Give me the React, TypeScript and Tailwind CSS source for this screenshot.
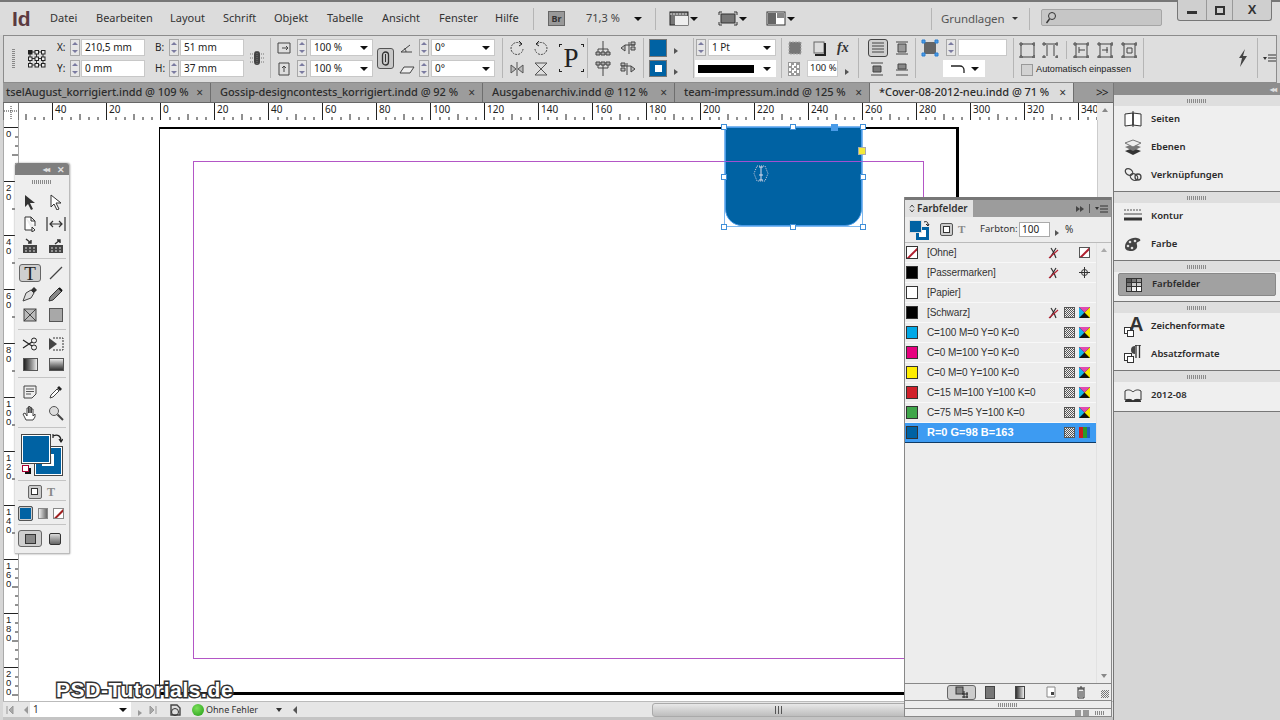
import React from 'react'

const FONT = "font-['Noto_Sans','Liberation_Sans',sans-serif]"

function Svg({ w = 16, h = 16, children, className = '' }: { w?: number; h?: number; children: React.ReactNode; className?: string }) {
  return (
    <svg width={w} height={h} viewBox={`0 0 ${w} ${h}`} className={'shrink-0 ' + className} fill="none">
      {children}
    </svg>
  )
}

const Down = () => <span className="inline-block w-0 h-0 border-l-[4px] border-r-[4px] border-t-[4px] border-l-transparent border-r-transparent border-t-[#111]" />
const Right = ({ c = 'border-l-[#555]' }: { c?: string }) => <span className={'inline-block w-0 h-0 border-t-[3px] border-b-[3px] border-l-[4px] border-t-transparent border-b-transparent ' + c} />
const Sep = ({ h = 'h-[40px]' }: { h?: string }) => <div className={'w-px bg-[#b5b5b5] shrink-0 ' + h} />
const Grip = () => <div className="w-[20px] h-[4px] bg-[repeating-linear-gradient(90deg,#8a8a8a_0,#8a8a8a_1px,transparent_1px,transparent_2px)]" />

function Spinner() {
  return (
    <div className="w-[10px] h-[17px] flex flex-col border border-[#a8a8a8] bg-[#e6e6e6] shrink-0 items-center justify-around">
      <span className="w-0 h-0 border-l-[3px] border-r-[3px] border-b-[3px] border-l-transparent border-r-transparent border-b-[#7b7ba0]" />
      <span className="w-0 h-0 border-l-[3px] border-r-[3px] border-t-[3px] border-l-transparent border-r-transparent border-t-[#7b7ba0]" />
    </div>
  )
}

function Field({ w, text, caret }: { w: string; text?: string; caret?: boolean }) {
  return (
    <div className={'h-[17px] bg-white border border-[#c8c8c8] flex items-center justify-between pl-[3px] pr-[4px] text-[10px] text-[#222] shrink-0 ' + w}>
      <span>{text}</span>
      {caret && <Down />}
    </div>
  )
}

function MenuBar() {
  const items: [string, string][] = [
    ['Datei', 'w-[46px]'], ['Bearbeiten', 'w-[74px]'], ['Layout', 'w-[53px]'], ['Schrift', 'w-[51px]'], ['Objekt', 'w-[53px]'],
    ['Tabelle', 'w-[55px]'], ['Ansicht', 'w-[57px]'], ['Fenster', 'w-[56px]'], ['Hilfe', 'w-[38px]'],
  ]
  return (
    <div className="h-[35px] shrink-0 bg-[#dcdcdc] border-t-2 border-[#777] flex items-center relative">
      <span className="w-[50px] pl-[12px] text-[21px] font-bold text-[#5b3a40] font-['Liberation_Sans',sans-serif] leading-none">Id</span>
      {items.map(([t, w]) => (
        <span key={t} className={'text-[11px] text-[#333] ' + w}>{t}</span>
      ))}
      <Sep h="h-[22px]" />
      <div className="ml-[14px] w-[17px] h-[15px] bg-[#999] border border-[#666] text-[9px] font-bold text-[#333] flex items-center justify-center">Br</div>
      <span className="ml-[21px] w-[48px] text-[11px] text-[#444]">71,3 %</span>
      <Down />
      <div className="ml-[13px]"><Sep h="h-[22px]" /></div>
      <div className="ml-[13px] flex items-center gap-[1px] w-[49px]">
        <Svg w={20} h={15}><rect x="1" y="1" width="18" height="13" fill="#777" stroke="#222" /><rect x="6" y="5" width="13" height="9" fill="#eee" /><path d="M1 3h18" stroke="#ddd" strokeDasharray="2 1" /></Svg>
        <Down />
      </div>
      <div className="flex items-center gap-[1px] w-[48px]">
        <Svg w={20} h={15}><rect x="3" y="3" width="14" height="9" fill="#777" stroke="#333" /><path d="M1 1h3M1 1v3M19 1h-3M19 1v3M1 14h3M1 14v-3M19 14h-3M19 14v-3" stroke="#333" /></Svg>
        <Down />
      </div>
      <div className="flex items-center gap-[1px] w-[165px]">
        <Svg w={20} h={15}><rect x="1" y="1" width="18" height="13" fill="#fff" stroke="#333" /><rect x="2" y="2" width="8" height="11" fill="#666" /><rect x="11" y="2" width="7" height="5" fill="#888" /></Svg>
        <Down />
      </div>
      <Sep h="h-[22px]" />
      <span className="ml-[9px] w-[71px] text-[11.5px] text-[#555] tracking-[-0.1px]">Grundlagen</span>
      <span className="w-0 h-0 border-l-[3px] border-r-[3px] border-t-[3px] border-l-transparent border-r-transparent border-t-[#333]" />
      <div className="ml-[11px]"><Sep h="h-[22px]" /></div>
      <div className="ml-[11px] w-[121px] h-[17px] -mt-[2px] bg-[#c6c6c6] border border-[#a5a5a5] rounded-[2px] flex items-center pl-[3px]">
        <Svg w={12} h={13}><circle cx="7" cy="5" r="3.5" stroke="#333" /><path d="M4.5 8L1.5 12" stroke="#333" strokeWidth="1.4" /></Svg>
      </div>
      <div className="absolute right-[8px] top-[-2px] h-[21px] w-[95px] flex border border-t-0 border-[#777] rounded-b-[3px] bg-[#cfcfcf] items-center">
        <div className="w-[28px] flex justify-center"><div className="w-[10px] h-[3px] bg-[#333] mt-[4px]" /></div>
        <div className="w-[27px] h-full border-x border-[#999] flex items-center justify-center"><div className="w-[10px] h-[9px] border-2 border-[#333]" /></div>
        <div className="flex-1 text-center text-[13px] font-bold text-[#333] font-['Liberation_Sans',sans-serif]">X</div>
      </div>
    </div>
  )
}

function Cell({ w, children, cls = '' }: { w: string; children?: React.ReactNode; cls?: string }) {
  return <div className={'shrink-0 flex items-center justify-center ' + w + ' ' + cls}>{children}</div>
}

function TwoRow({ top, bottom, w }: { top: React.ReactNode; bottom: React.ReactNode; w: string }) {
  return (
    <div className={'shrink-0 flex flex-col gap-[4px] ' + w}>
      <div className="h-[17px] flex items-center">{top}</div>
      <div className="h-[17px] flex items-center">{bottom}</div>
    </div>
  )
}

const IconBox = ({ d, fill = 'none' }: { d: string; fill?: string }) => (
  <Svg w={16} h={16}><path d={d} stroke="#444" fill={fill} /></Svg>
)

function ControlBar() {
  return (
    <div className="h-[48px] shrink-0 mx-[3px] pb-[2px] bg-[#dedede] border border-[#8c8c8c] flex items-center text-[#222]">
      <div className="w-[18px] flex justify-center"><div className="w-[3px] h-[19px] bg-[repeating-linear-gradient(0deg,#888_0,#888_1px,transparent_1px,transparent_2px)]" /></div>
      <Cell w="w-[28px]">
        <Svg w={19} h={19}>
          <path d="M3 3h14M3 9.500h14M3 16h14M3 3v13M9.500 3v13M16 3v13" stroke="#333" />
          {[1, 7.5, 14].map(y => [1, 7.5, 14].map(x => <rect key={`${x}${y}`} x={x + 0.5} y={y + 0.5} width="3.500" height="3.500" stroke="#222" fill={x === 1 && y === 1 ? '#222' : '#eee'} />))}
        </Svg>
      </Cell>
      <TwoRow w="w-[99px]"
        top={<><span className="w-[13px] ml-[7px] text-[10px]">X:</span><Spinner /><span className="w-[1px]" /><Field w="w-[64px]" text="210,5 mm" /></>}
        bottom={<><span className="w-[13px] ml-[7px] text-[10px]">Y:</span><Spinner /><span className="w-[1px]" /><Field w="w-[64px]" text="0 mm" /></>}
      />
      <TwoRow w="w-[97px]"
        top={<><span className="w-[14px] ml-[6px] text-[10px]">B:</span><Spinner /><span className="w-[1px]" /><Field w="w-[64px]" text="51 mm" /></>}
        bottom={<><span className="w-[14px] ml-[6px] text-[10px]">H:</span><Spinner /><span className="w-[1px]" /><Field w="w-[64px]" text="37 mm" /></>}
      />
      <Cell w="w-[22px]" cls="mr-[2px]">
        <Svg w={14} h={16}><rect x="4" y="1" width="6" height="14" rx="3" fill="#444" /><path d="M0 4h3M0 8h3M0 12h3M11 4h3M11 8h3M11 12h3M7 1v14" stroke="#777" strokeDasharray="1 1" /></Svg>
      </Cell>
      <Sep />
      <TwoRow w="w-[105px]"
        top={<><span className="w-[26px] flex justify-center"><IconBox d="M2 3h12v10H2zM6 8h6M10 6l2 2-2 2" /></span><Spinner /><span className="w-[3px]" /><Field w="w-[63px]" text="100 %" caret /></>}
        bottom={<><span className="w-[26px] flex justify-center"><IconBox d="M3 2h10v12H3zM8 11V5M6 7l2-2 2 2" /></span><Spinner /><span className="w-[3px]" /><Field w="w-[63px]" text="100 %" caret /></>}
      />
      <Cell w="w-[18px]">
        <div className="w-[17px] h-[21px] border border-[#555] rounded-[3px] bg-[#c9c9c9] flex items-center justify-center">
          <Svg w={9} h={15}><rect x="1.5" y="1" width="6" height="13" rx="3" stroke="#333" strokeWidth="1.3" /><path d="M4.5 3v8" stroke="#333" /></Svg>
        </div>
      </Cell>
      <TwoRow w="w-[108px]"
        top={<><span className="w-[25px] flex justify-center"><IconBox d="M2 12L11 5M2 12h11M7 12c0-2-1-3-2-3.500" /></span><Spinner /><span className="w-[2px]" /><Field w="w-[64px]" text="0°" caret /></>}
        bottom={<><span className="w-[25px] flex justify-center"><IconBox d="M1 12L5 6h10l-4 6z" fill="#eee" /></span><Spinner /><span className="w-[2px]" /><Field w="w-[64px]" text="0°" caret /></>}
      />
      <Sep />
      <TwoRow w="w-[52px]"
        top={<span className="flex pl-[6px] gap-[8px]">
          <Svg w={16} h={16}><path d="M12 4A6 6 0 1 0 14 9" stroke="#444" strokeDasharray="2 1" /><path d="M10 1l3 3-3 2" stroke="#222" /></Svg>
          <Svg w={16} h={16}><path d="M4 4A6 6 0 1 1 2 9" stroke="#444" strokeDasharray="2 1" /><path d="M6 1L3 4l3 2" stroke="#222" /></Svg>
        </span>}
        bottom={<span className="flex pl-[6px] gap-[8px]">
          <Svg w={16} h={16}><path d="M8 1v14M2 4l5 4-5 4zM14 4l-5 4 5 4z" stroke="#555" fill="#bbb" /></Svg>
          <Svg w={16} h={16}><path d="M2 2h12L8 8zM2 14h12L8 8z" stroke="#555" fill="#ddd" /></Svg>
        </span>}
      />
      <Cell w="w-[32px]">
        <div className="relative w-[25px] h-[34px] flex items-center justify-center font-['Liberation_Serif',serif] text-[27px] leading-none text-[#222]">
          P
          <span className="absolute left-0 top-[3px] w-[3px] h-[3px] border-l border-t border-[#222]" />
          <span className="absolute right-0 top-[3px] w-[3px] h-[3px] border-r border-t border-[#222]" />
          <span className="absolute left-0 bottom-[3px] w-[3px] h-[3px] border-l border-b border-[#222]" />
          <span className="absolute right-0 bottom-[3px] w-[3px] h-[3px] border-r border-b border-[#222]" />
        </div>
      </Cell>
      <Sep />
      <TwoRow w="w-[55px]"
        top={<span className="flex pl-[7px] gap-[9px]">
          <IconBox d="M8 1v3M3 9h10M3 9v3M8 4v8M13 9v3M1 12h4v3H1zM6 12h4v3H6zM11 12h4v3h-4z" fill="#aaa" />
          <IconBox d="M9 2v12M5 5h10M1 8l4-3v6z M11 2h4v3h-4zM11 7h4v3h-4z" fill="#bbb" />
        </span>}
        bottom={<span className="flex pl-[7px] gap-[9px]">
          <IconBox d="M8 15v-3M3 7h10M3 7V4M8 12V4M13 7V4M1 1h4v3H1zM6 1h4v3H6zM11 1h4v3h-4z" fill="#aaa" />
          <IconBox d="M7 2v12M11 5H1M15 8l-4-3v6zM1 2h4v3H1zM1 7h4v3H1z" fill="#bbb" />
        </span>}
      />
      <Sep />
      <TwoRow w="w-[49px]"
        top={<><div className="ml-[5px] w-[18px] h-[18px] bg-[#0062a3] border border-[#777]" /><span className="ml-[7px]"><Right /></span></>}
        bottom={<><div className="ml-[5px] w-[18px] h-[17px] bg-[#0062a3] border border-[#777] flex items-center justify-center"><div className="w-[7px] h-[7px] bg-white" /></div><span className="ml-[7px]"><Right /></span></>}
      />
      <Sep />
      <TwoRow w="w-[87px]"
        top={<><span className="w-[2px]" /><Spinner /><span className="w-[2px]" /><Field w="w-[68px]" text="1 Pt" caret /></>}
        bottom={<div className="ml-[1px] h-[17px] w-[81px] bg-white flex items-center justify-between pl-[3px] pr-[5px]"><div className="w-[56px] h-[8px] bg-black" /><Down /></div>}
      />
      <Sep />
      <TwoRow w="w-[76px]"
        top={<span className="flex items-center pl-[5px] gap-[9px]">
          <Svg w={16} h={16}><rect x="2" y="2" width="12" height="12" fill="#777" stroke="#aaa" strokeDasharray="2 1" /></Svg>
          <Svg w={16} h={16}><rect x="2" y="2" width="10" height="11" fill="#ddd" stroke="#666" /><path d="M13 3v12H3" stroke="#222" strokeWidth="2" /></Svg>
          <span className="font-['Liberation_Serif',serif] italic font-bold text-[14px] text-[#333] leading-none">fx</span>
        </span>}
        bottom={<span className="flex items-center pl-[6px]">
          <span className="w-[12px] h-[14px] border border-[#999] bg-[repeating-conic-gradient(#999_0_25%,#fff_0_50%)] bg-[length:5px_5px]" />
          <div className="ml-[7px] w-[31px] h-[17px] bg-white border border-[#ccc] text-[9.5px] whitespace-nowrap flex items-center pl-[2px]">100 %</div>
          <span className="ml-[7px]"><Right /></span>
        </span>}
      />
      <Sep />
      <TwoRow w="w-[56px]"
        top={<span className="flex items-center pl-[9px] gap-[6px]">
          <span className="w-[20px] h-[18px] border border-[#444] rounded-[3px] bg-[#cfcfcf] flex items-center justify-center"><IconBox d="M2 3h12M2 6h12M2 9h12M2 12h12" /></span>
          <IconBox d="M2 2h12M2 14h12M4 4h8v8H4z" fill="#999" />
        </span>}
        bottom={<span className="flex items-center pl-[10px] gap-[9px]">
          <IconBox d="M2 2h12M2 14h12M4 5h8v6H4z" fill="#777" />
          <IconBox d="M2 9h12M2 14h12M4 3h8v5H4z" fill="#888" />
        </span>}
      />
      <Sep />
      <TwoRow w="w-[97px]"
        top={<><span className="ml-[5px] w-[25px]"><Svg w={18} h={18}><rect x="3" y="3" width="12" height="12" fill="#666" /><path d="M1 1h3v3H1zM14 1h3v3h-3zM1 14h3v3H1zM14 14h3v3h-3z" stroke="#2a7fd0" fill="#4a9be8" /></Svg></span><Spinner /><span className="w-[2px]" /><Field w="w-[49px]" /></>}
        bottom={<div className="ml-[27px] w-[42px] h-[17px] bg-white flex items-center justify-center gap-[5px]"><Svg w={16} h={10}><path d="M1 2h9a4 4 0 0 1 4 4v3" stroke="#222" strokeWidth="1.3" /></Svg><Down /></div>}
      />
      <Sep />
      <div className="w-[129px] shrink-0 flex flex-col gap-[5px] pl-[5px]">
        <div className="h-[18px] flex items-center">
          <IconBox d="M1 1h2v2H1zM14 1h2v2h-2zM1 14h2v2H1zM14 14h2v2h-2zM3 2h11M2 3v11M15 3v11M3 15h11" />
          <span className="ml-[7px]"><IconBox d="M1 1h2v2H1zM14 1h2v2h-2zM1 14h2v2H1zM14 14h2v2h-2zM3 2h11M5 3v11M12 3v11" /></span>
          <span className="ml-[8px]"><Sep h="h-[18px]" /></span>
          <span className="ml-[6px]"><IconBox d="M1 1h2v2H1zM14 1h2v2h-2zM1 14h2v2H1zM14 14h2v2h-2zM3 2h11M3 15h11M3 3v11M14 3v11M6 5v6M6 8h6" /></span>
          <span className="ml-[8px]"><IconBox d="M1 1h2v2H1zM14 1h2v2h-2zM1 14h2v2H1zM14 14h2v2h-2zM3 2h11M3 15h11M3 3v11M14 3v11M10 5v6M5 8h6" /></span>
          <span className="ml-[8px]"><IconBox d="M1 1h2v2H1zM14 1h2v2h-2zM1 14h2v2H1zM14 14h2v2h-2zM3 2h11M3 15h11M3 3v11M14 3v11M6 6h5v5H6z" /></span>
        </div>
        <div className="h-[12px] flex items-center ml-[2px]">
          <span className="w-[12px] h-[12px] border border-[#999] bg-[#d2d2d2]" />
          <span className="ml-[3px] text-[9.2px] text-[#222] whitespace-nowrap font-['Liberation_Sans',sans-serif]">Automatisch einpassen</span>
        </div>
      </div>
      <Sep />
      <Cell w="w-[113px]" cls="justify-end pr-[9px]">
        <Svg w={10} h={18}><path d="M7 0L1 9h3l-2 9 7-11H5z" fill="#444" /></Svg>
      </Cell>
      <Sep />
      <div className="flex items-center gap-[1px] pl-[5px]">
        <span className="w-0 h-0 border-l-[2px] border-r-[2px] border-t-[3px] border-l-transparent border-r-transparent border-t-[#333]" />
        <Svg w={8} h={8}><path d="M0 1h8M0 4h8M0 7h8" stroke="#333" /></Svg>
      </div>
    </div>
  )
}

const tabs = [
  { t: 'tselAugust_korrigiert.indd @ 109 %', w: 'w-[208px] pl-[3px]', cls: '' },
  { t: 'Gossip-designcontests_korrigiert.indd @ 92 %', w: 'w-[272px] pl-[9px]', cls: '' },
  { t: 'Ausgabenarchiv.indd @ 112 %', w: 'w-[192px] pl-[9px]', cls: '' },
  { t: 'team-impressum.indd @ 125 %', w: 'w-[195px] pl-[9px]', cls: '' },
  { t: '*Cover-08-2012-neu.indd @ 71 %', w: 'w-[204px] pl-[9px]', cls: 'bg-[#dcdcdc]' },
]

function Tabs() {
  return (
    <div className="h-[20px] shrink-0 ml-[3px] bg-[#9c9c9c] border-b border-[#666] flex items-center overflow-hidden">
      {tabs.map(tab => (
        <div key={tab.t} className={'h-full shrink-0 flex items-center justify-between pr-[7px] border-r border-[#6e6e6e] overflow-hidden ' + tab.w + ' ' + tab.cls}>
          <span className="text-[11px] font-medium text-[#2c2c2c] whitespace-nowrap tracking-[-0.05px]">{tab.t}</span>
          <span className="text-[12px] text-[#333] leading-none ml-[4px]">×</span>
        </div>
      ))}
      <div className="ml-[22px] text-[12px] text-[#222] tracking-[-1px]">&gt;&gt;</div>
    </div>
  )
}

const hLabels = ['', '40', '20', '0', '20', '40', '60', '80', '100', '120', '140', '160', '180', '200', '220', '240', '260', '280', '300', '320', '340']

function Ruler() {
  return (
    <div className="h-[17px] shrink-0 flex bg-white ml-[3px]">
      <div className="w-[16px] shrink-0 border-l border-[#777] border-r border-[#222] relative">
        <Svg w={14} h={17}><path d="M0 8h14M7 3v14" stroke="#333" strokeDasharray="1 1" /></Svg>
      </div>
      <div className="flex-1 overflow-hidden">
        <div className="flex ml-[-21px] h-full">
          {hLabels.map((n, i) => (
            <div key={i} className="w-[54px] shrink-0 h-full border-l border-[#222] relative pl-[2px] text-[10px] leading-[12px] text-[#222]">
              {n}
              <Svg w={53} h={17} className="absolute left-0 top-0">
                <path d="M9 14v3M18 14v3M27 11v6M36 14v3M45 14v3" stroke="#222" />
              </Svg>
            </div>
          ))}
        </div>
      </div>
      <div className="w-[16px] shrink-0 bg-[#ececec] flex justify-center pt-[5px]">
        <span className="w-0 h-0 border-l-[3px] border-r-[3px] border-b-[4px] border-l-transparent border-r-transparent border-b-[#888]" />
      </div>
    </div>
  )
}

const vLabels = ['0', '20', '40', '60', '80', '100', '120', '140', '160', '180', '200']

function VRuler() {
  return (
    <div className="w-[16px] ml-[3px] shrink-0 bg-white border-l border-[#777] border-r border-[#aaa] overflow-hidden pt-[7px]">
      {vLabels.map(n => (
        <div key={n} className="h-[54px] border-t border-[#222] relative pl-[2px] pt-[1px] text-[9.5px] leading-[9px] text-[#222] font-['Liberation_Sans',sans-serif]">
          {n.split('').map((c, i) => <div key={i}>{c}</div>)}
          <Svg w={14} h={53} className="absolute left-0 top-0">
            <path d="M11 9h3M11 18h3M8 27h6M11 36h3M11 45h3" stroke="#222" />
          </Svg>
        </div>
      ))}
    </div>
  )
}

const Handle = ({ cls }: { cls: string }) => <span className={'absolute w-[6px] h-[6px] bg-white border border-[#3f8fd8] ' + cls} />

function Canvas() {
  return (
    <div className="flex-1 min-h-0 flex">
      <VRuler />
      <div className="flex-1 bg-white relative overflow-hidden">
        {/* Seite */}
        <div className="absolute left-[140px] top-[7px] w-[800px] h-[568px] border-t-2 border-l border-r-[3px] border-b-[3px] border-black">
          <div className="absolute left-[33px] top-[32px] w-[731px] h-[498px] border border-[#b356c6]" />
          <div className="absolute left-[565px] top-[-2px] w-[137px] h-[99px]">
            <div className="absolute inset-0 bg-[#0062a3] rounded-b-[17px] border-[1px] border-[#4a9be8]" />
            <div className="absolute left-[-1px] right-[-1px] top-[-1px] bottom-[-1px] border border-[#4a9be8]/70" />
            <div className="absolute left-0 right-0 top-[34px] h-px bg-[#a050d0]" />
            <Handle cls="left-[-4px] top-[-3px]" />
            <Handle cls="left-[65px] top-[-3px]" />
            <Handle cls="right-[-4px] top-[-3px]" />
            <Handle cls="left-[-4px] top-[47px]" />
            <Handle cls="right-[-4px] top-[47px]" />
            <Handle cls="left-[-4px] bottom-[-4px]" />
            <Handle cls="left-[65px] bottom-[-4px]" />
            <Handle cls="right-[-4px] bottom-[-4px]" />
            <span className="absolute left-[106px] top-[-3px] w-[7px] h-[7px] bg-[#4a9be8]" />
            <span className="absolute right-[-4px] top-[20px] w-[8px] h-[8px] bg-[#f4ea3a] border border-[#aaa]" />
            <Svg w={16} h={17} className="absolute left-[28px] top-[38px]">
              <path d="M4 1h8l3 7.500-3 7.500H4L1 8.500z" stroke="#ccd" strokeDasharray="1 1" />
              <path d="M6 2h4M8 2v13M6 15h4M6 10h4" stroke="#dde" />
            </Svg>
          </div>
        </div>
      </div>
      <div className="w-[16px] shrink-0 bg-[#ececec] border-l border-[#ccc]" />
    </div>
  )
}

function StatusBar() {
  return (
    <div className="h-[19px] shrink-0 ml-[3px] border-t border-[#bbb] border-b-[3px] border-b-[#c4c4c4] bg-[#e6e6e6] flex items-center text-[#333]">
      <span className="ml-[1px] w-[12px] flex justify-center"><Svg w={8} h={8}><path d="M1 0v8M7 0L3 4l4 4z" stroke="#999" fill="#aaa" /></Svg></span>
      <span className="ml-[7px]"><Svg w={6} h={8}><path d="M5 0L1 4l4 4z" fill="#999" /></Svg></span>
      <div className="ml-[1px] w-[101px] h-[15px] bg-white flex items-center justify-between pl-[3px] pr-[4px] text-[10px]"><span>1</span><Down /></div>
      <span className="ml-[7px]"><Right c="border-l-[#999]" /></span>
      <span className="ml-[7px]"><Svg w={8} h={8}><path d="M1 0l4 4-4 4zM7 0v8" stroke="#999" fill="#aaa" /></Svg></span>
      <span className="ml-[11px]"><Svg w={14} h={14}><path d="M3 2h6l3 3v7H3z" fill="#ddd" stroke="#444" strokeWidth="1.4" /><circle cx="7" cy="9" r="3.500" stroke="#333" /></Svg></span>
      <span className="ml-[10px] w-[12px] h-[12px] rounded-full bg-[radial-gradient(circle_at_40%_35%,#7be05a,#1f9a14)]" />
      <span className="ml-[2px] w-[70px] text-[9px] whitespace-nowrap">Ohne Fehler</span>
      <span className="w-0 h-0 border-l-[3px] border-r-[3px] border-t-[4px] border-l-transparent border-r-transparent border-t-[#333]" />
      <span className="ml-[11px] w-0 h-0 border-t-[4px] border-b-[4px] border-r-[4px] border-t-transparent border-b-transparent border-r-[#555]" />
      <div className="ml-[355px] w-[253px] h-[14px] border border-[#aaa] rounded-l-[3px] bg-gradient-to-b from-[#e8e8e8] to-[#bdbdbd] flex items-center justify-center">
        <div className="w-[7px] h-[8px] bg-[repeating-linear-gradient(90deg,#555_0,#555_1px,transparent_1px,transparent_3px)]" />
      </div>
    </div>
  )
}

/* ---- Werkzeuge ---- */
function ToolRow({ a, b, h = 'h-[21px]', aActive }: { a: React.ReactNode; b: React.ReactNode; h?: string; aActive?: boolean }) {
  return (
    <div className={'flex items-center justify-between pl-[4px] pr-[2px] ' + h}>
      <div className={'w-[22px] h-[18px] flex items-center justify-center rounded-[3px] ' + (aActive ? 'border border-[#666] bg-[#cfcfcf]' : '')}>{a}</div>
      <div className="w-[22px] flex items-center justify-center">{b}</div>
    </div>
  )
}
const Line = () => <div className="mx-[3px] h-px bg-[#c4c4c4]" />

function ToolPanel() {
  return (
    <div className="absolute left-[15px] top-[163px] w-[55px] h-[391px] bg-[#eeeeee] border-r border-b border-[#bbb] rounded-t-[3px] flex flex-col shadow-[0_0_2px_#888]">
      <div className="h-[12px] bg-[#7f7f7f] rounded-t-[3px] flex items-center justify-end gap-[8px] pr-[4px] text-[#ddd]">
        <span className="text-[8px] leading-none font-bold tracking-[-1px]">◂◂</span>
        <span className="text-[9px] leading-none font-bold">✕</span>
      </div>
      <div className="flex justify-center pt-[5px] pb-[7px]"><Grip /></div>
      <ToolRow
        a={<Svg w={14} h={16}><path d="M2 1l10 8H7l3 6-2 1-3-6-3 3z" fill="#333" /></Svg>}
        b={<Svg w={14} h={16}><path d="M2 1l10 8H7l3 6-2 1-3-6-3 3z" fill="#fff" stroke="#333" /></Svg>}
        h="h-[22px]"
      />
      <ToolRow
        a={<Svg w={14} h={16}><path d="M2 1h6l4 4v5M2 1v13h7M8 1v4h4M9 11l3 3-3 2z" stroke="#333" fill="#fff" /></Svg>}
        b={<Svg w={20} h={14}><path d="M1 0v14M19 0v14M4 7h12M7 4L4 7l3 3M13 4l3 3-3 3" stroke="#333" strokeWidth="1.2" /></Svg>}
        h="h-[22px]"
      />
      <ToolRow
        a={<Svg w={16} h={16}><path d="M1 7h14v8H1z" fill="#444" /><path d="M3 10h2M7 10h2M11 10h2M3 13h2M7 13h2M11 13h2" stroke="#ddd" /><path d="M4 1l5 4M9 2v3H6" stroke="#333" strokeWidth="1.4" /></Svg>}
        b={<Svg w={16} h={16}><path d="M1 7h14v8H1z" fill="#444" /><path d="M3 10h2M7 10h2M11 10h2M3 13h2M7 13h2M11 13h2" stroke="#ddd" /><path d="M7 6l5-4M9 2h3v3" stroke="#333" strokeWidth="1.4" /></Svg>}
        h="h-[22px]"
      />
      <div className="pt-[1px] pb-[4px]"><Line /></div>
      <ToolRow aActive
        a={<span className="font-['Liberation_Serif',serif] text-[19px] leading-none text-[#222]">T</span>}
        b={<Svg w={14} h={14}><path d="M1 13L13 1" stroke="#444" strokeWidth="1.2" /></Svg>}
        h="h-[20px]"
      />
      <ToolRow
        a={<Svg w={16} h={16}><path d="M1 15l3-8 5-3 3 3-3 5z" fill="#ddd" stroke="#444" /><path d="M9 4l3-3 3 3-3 3z" fill="#333" /></Svg>}
        b={<Svg w={16} h={16}><path d="M2 11L11 2l3 3-9 9-4 1z" fill="#888" stroke="#333" /><path d="M11 2l3 3" stroke="#111" strokeWidth="2" /></Svg>}
        h="h-[22px]"
      />
      <ToolRow
        a={<Svg w={14} h={14}><rect x="1" y="1" width="12" height="12" fill="#bbb" stroke="#444" /><path d="M1 1l12 12M13 1L1 13" stroke="#444" /></Svg>}
        b={<Svg w={14} h={14}><rect x="0.500" y="0.500" width="13" height="13" fill="#a8a8a8" stroke="#555" /></Svg>}
        h="h-[20px]"
      />
      <div className="pt-[4px] pb-[3px]"><Line /></div>
      <ToolRow
        a={<Svg w={16} h={14}><circle cx="12" cy="3.500" r="2.500" stroke="#222" /><circle cx="12" cy="10.500" r="2.500" stroke="#222" /><path d="M1 3l9 6M1 11l9-6" stroke="#222" strokeWidth="1.2" /></Svg>}
        b={<Svg w={16} h={14}><path d="M1 1l8 6-8 6z" fill="#444" /><path d="M5 1h10v12H5" stroke="#333" strokeDasharray="2 1" /></Svg>}
        h="h-[21px]"
      />
      <ToolRow
        a={<div className="w-[15px] h-[13px] bg-gradient-to-r from-[#222] to-[#eee] border border-[#555]" />}
        b={<div className="w-[15px] h-[13px] bg-gradient-to-b from-[#eee] to-[#333] border border-[#555]" />}
        h="h-[21px]"
      />
      <div className="pt-[2px] pb-[3px]"><Line /></div>
      <ToolRow
        a={<Svg w={14} h={14}><path d="M1 1h12v8l-4 4H1z" fill="#eee" stroke="#444" /><path d="M3 4h8M3 6.500h8M3 9h5" stroke="#555" /></Svg>}
        b={<Svg w={14} h={14}><path d="M1 13l1-3 6-6 2 2-6 6z" fill="#fff" stroke="#444" /><path d="M8 3l2-2 3 3-2 2z" fill="#222" /></Svg>}
        h="h-[21px]"
      />
      <ToolRow
        a={<Svg w={16} h={16}><path d="M4 15l-3-6 2-1 2 3V3h1.500v5V1.500H8V8V2.500h1.500V8V4H11v7l2-2v3l-2 3z" fill="#fff" stroke="#444" /></Svg>}
        b={<Svg w={16} h={16}><circle cx="6" cy="6" r="4.500" fill="#ddd" stroke="#555" /><path d="M9.500 9.500L15 15" stroke="#444" strokeWidth="2" /></Svg>}
        h="h-[21px]"
      />
      <div className="pt-[4px]"><Line /></div>
      <div className="relative h-[48px] shrink-0">
        <div className="absolute left-[20px] top-[19px] w-[27px] h-[28px] bg-[#0062a3] border border-white shadow-[0_0_0_1px_#444] flex items-center justify-center">
          <div className="w-[12px] h-[12px] border-2 border-white bg-[#eee] ml-[-2px] mt-[-2px]" />
        </div>
        <div className="absolute left-[7px] top-[7px] w-[28px] h-[28px] bg-[#0062a3] border border-white shadow-[0_0_0_1px_#444]" />
        <Svg w={11} h={11} className="absolute left-[37px] top-[5px]"><path d="M1 3c5-2 8 0 8 5M7 6l2 3 2-3M1 1v4" stroke="#222" strokeWidth="1.2" /></Svg>
        <Svg w={10} h={10} className="absolute left-[7px] top-[37px]"><rect x="3" y="3" width="6" height="6" fill="#111" /><rect x="0.500" y="0.500" width="6" height="6" fill="#fff" stroke="#a03" /></Svg>
      </div>
      <div className="pt-[4px] pb-[2px]"><Line /></div>
      <div className="h-[17px] flex items-center justify-center gap-[5px] pr-[1px]">
        <span className="w-[14px] h-[14px] border border-[#666] rounded-[2px] bg-[#ccc] flex items-center justify-center"><span className="w-[7px] h-[7px] bg-white border border-[#333]" /></span>
        <span className="font-['Liberation_Serif',serif] font-bold text-[12px] text-[#888]">T</span>
      </div>
      <div className="pb-[4px]"><Line /></div>
      <div className="h-[16px] flex items-center gap-[5px] pl-[3px]">
        <span className="w-[15px] h-[15px] border border-[#555] rounded-[2px] bg-[#0062a3] shadow-[inset_0_0_0_1px_#ccc]" />
        <span className="w-[10px] h-[11px] bg-gradient-to-r from-[#eee] to-[#666] border border-[#888]" />
        <span className="w-[11px] h-[11px] bg-white border border-[#888] relative overflow-hidden">
          <span className="absolute left-[-2px] top-[4px] w-[15px] h-[2px] bg-[#a02020] -rotate-45" />
        </span>
      </div>
      <div className="pt-[3px] pb-[5px]"><Line /></div>
      <div className="flex items-center pl-[3px] pr-[4px] justify-between">
        <span className="w-[24px] h-[17px] border border-[#666] rounded-[3px] bg-[#cfcfcf] flex items-center justify-center"><span className="w-[11px] h-[10px] bg-[#888] border border-[#333]" /></span>
        <span className="w-[12px] h-[12px] mr-[4px] rounded-[2px] bg-gradient-to-b from-[#ddd] to-[#666] border border-[#333]" />
      </div>
    </div>
  )
}

/* ---- Farbfelder ---- */
const swatches = [
  { n: '[Ohne]', c: 'bg-white', none: true, x: true, end: 'none' },
  { n: '[Passermarken]', c: 'bg-black', x: true, end: 'reg' },
  { n: '[Papier]', c: 'bg-white' },
  { n: '[Schwarz]', c: 'bg-black', x: true, g: true, end: 'cmyk' },
  { n: 'C=100 M=0 Y=0 K=0', c: 'bg-[#00a8e6]', g: true, end: 'cmyk' },
  { n: 'C=0 M=100 Y=0 K=0', c: 'bg-[#e6007e]', g: true, end: 'cmyk' },
  { n: 'C=0 M=0 Y=100 K=0', c: 'bg-[#ffed00]', g: true, end: 'cmyk' },
  { n: 'C=15 M=100 Y=100 K=0', c: 'bg-[#d0202a]', g: true, end: 'cmyk' },
  { n: 'C=75 M=5 Y=100 K=0', c: 'bg-[#3fa64a]', g: true, end: 'cmyk' },
  { n: 'R=0 G=98 B=163', c: 'bg-[#0062a3]', g: true, end: 'rgb', sel: true },
]

const Cmyk = () => (
  <Svg w={11} h={11}>
    <rect width="11" height="11" fill="#111" />
    <path d="M0 0l5.500 5.500L0 11z" fill="#19b5e8" /><path d="M11 0L5.500 5.500 11 11z" fill="#f5e500" /><path d="M0 0h11L5.500 5.500z" fill="#e04ab0" />
  </Svg>
)
const Rgb = () => (
  <Svg w={11} h={11}><rect width="4" height="11" fill="#c81e1e" /><rect x="4" width="4" height="11" fill="#2a9a2a" /><rect x="8" width="3" height="11" fill="#1f5fc0" /></Svg>
)
const NoPrint = () => (
  <Svg w={11} h={12}><path d="M3 1l3 5 2 5M8 1L5 6l-3 5" stroke="#333" strokeWidth="1.2" /><path d="M1 11L10 3" stroke="#b02030" strokeWidth="1.2" /></Svg>
)
const Grey = () => <span className="w-[11px] h-[11px] border border-[#555] bg-[repeating-conic-gradient(#555_0_25%,#eee_0_50%)] bg-[length:2px_2px]" />

function SwatchRow({ s }: { s: (typeof swatches)[number] }) {
  return (
    <div className={'h-[20px] flex items-center pl-[1px] border-b ' + (s.sel ? 'bg-[#3d9bf2] border-[#0f3b66]' : 'border-[#f8f8f8]')}>
      <span className={'w-[12px] h-[13px] border border-[#333] relative overflow-hidden shrink-0 ' + s.c}>
        {s.none && <span className="absolute left-[-3px] top-[5px] w-[18px] h-[1.5px] bg-[#b02030] -rotate-45" />}
      </span>
      <span className={"ml-[9px] w-[114px] whitespace-nowrap font-['Liberation_Sans',sans-serif] " + (s.sel ? 'text-[11px] text-white font-bold' : 'text-[10px] tracking-[-0.1px] text-[#333]')}>{s.n}</span>
      <span className="w-[13px] ml-[6px] flex justify-center">{s.x && <NoPrint />}</span>
      <span className="w-[12px] ml-[3px] flex justify-center">{s.g && <Grey />}</span>
      <span className="w-[11px] ml-[4px] flex justify-center">
        {s.end === 'cmyk' && <Cmyk />}
        {s.end === 'rgb' && <Rgb />}
        {s.end === 'none' && <span className="w-[11px] h-[11px] border border-[#555] bg-white relative overflow-hidden block"><span className="absolute left-[-2px] top-[4px] w-[14px] h-[2px] bg-[#b02030] -rotate-45" /></span>}
        {s.end === 'reg' && <Svg w={11} h={11}><circle cx="5.500" cy="5.500" r="3" stroke="#333" /><path d="M5.500 0v11M0 5.500h11" stroke="#333" /></Svg>}
      </span>
    </div>
  )
}

function SwatchPanel() {
  return (
    <div className="absolute left-[904px] top-[197px] w-[208px] h-[520px] bg-[#ededed] border-l border-r border-b border-[#888] flex flex-col">
      <div className="h-[20px] shrink-0 bg-[#9c9c9c] border-t-[3px] border-[#777] flex items-stretch">
        <div className="w-[68px] bg-[#e2e2e2] text-[10px] font-semibold text-[#333] flex items-center gap-[2px] pl-[4px]">
          <Svg w={6} h={9}><path d="M1 3.500L3 1l2 2.500M1 5.500L3 8l2-2.500" stroke="#444" /></Svg>Farbfelder
        </div>
        <div className="flex-1 flex items-center justify-end pr-[3px] gap-[5px]">
          <span className="flex"><Right c="border-l-[#444]" /><Right c="border-l-[#444]" /></span>
          <span className="w-px h-[9px] bg-[#555]" />
          <span className="flex items-center gap-[1px]">
            <span className="w-0 h-0 border-l-[2px] border-r-[2px] border-t-[3px] border-l-transparent border-r-transparent border-t-[#333]" />
            <Svg w={8} h={8}><path d="M0 1h8M0 4h8M0 7h8" stroke="#333" /></Svg>
          </span>
        </div>
      </div>
      <div className="h-[26px] shrink-0 flex items-center border-b border-[#bbb] pl-[4px]">
        <div className="relative w-[21px] h-[20px] shrink-0">
          <span className="absolute right-[1px] bottom-0 w-[13px] h-[13px] bg-[#0062a3] flex items-center justify-center"><span className="w-[7px] h-[7px] bg-white" /></span>
          <span className="absolute left-0 top-0 w-[13px] h-[13px] bg-[#0062a3] border border-[#ddd]" />
          <Svg w={7} h={7} className="absolute right-0 top-0"><path d="M1 2c3-1 4 0 4 3M3 4l2 2 1-2" stroke="#222" /></Svg>
        </div>
        <span className="ml-[10px] w-[13px] h-[13px] border border-[#555] rounded-[2px] bg-[#ccc] flex items-center justify-center shrink-0"><span className="w-[7px] h-[7px] bg-white border border-[#333]" /></span>
        <span className="ml-[5px] w-[13px] font-['Liberation_Serif',serif] font-bold text-[11px] text-[#888]">T</span>
        <span className="ml-[9px] w-[39px] text-[9.5px] text-[#333] whitespace-nowrap">Farbton:</span>
        <div className="w-[31px] h-[15px] bg-white border border-[#aaa] text-[10px] flex items-center pl-[2px] text-[#222]">100</div>
        <span className="ml-[5px]"><Right /></span>
        <span className="ml-[6px] text-[10px] text-[#333]">%</span>
      </div>
      <div className="flex-1 min-h-0 flex">
        <div className="w-[191px] shrink-0">
          {swatches.map(s => <SwatchRow key={s.n} s={s} />)}
        </div>
        <div className="flex-1 flex flex-col items-center justify-between py-[5px] border-l border-[#e2e2e2]">
          <span className="w-0 h-0 border-l-[3px] border-r-[3px] border-b-[4px] border-l-transparent border-r-transparent border-b-[#aaa]" />
          <span className="w-0 h-0 border-l-[3px] border-r-[3px] border-t-[4px] border-l-transparent border-r-transparent border-t-[#888]" />
        </div>
      </div>
      <div className="h-[17px] shrink-0 border-t border-[#888] flex items-center pl-[42px]">
        <div className="w-[29px] h-[15px] border border-[#666] rounded-[3px] bg-[#ccc] flex items-center justify-center">
          <Svg w={14} h={12}><rect x="1" y="1" width="7" height="7" fill="#888" stroke="#333" /><path d="M9 5v7M7 8h6M7 11h6M12 6v6" stroke="#222" /></Svg>
        </div>
        <span className="ml-[9px] w-[10px] h-[13px] bg-[#777] border border-[#444]" />
        <span className="ml-[20px] w-[10px] h-[13px] bg-gradient-to-r from-[#333] to-[#eee] border border-[#444]" />
        <span className="ml-[21px]"><Svg w={10} h={12}><path d="M1 1h8v10H1z" fill="#fff" stroke="#888" /><path d="M5 6h3v3H5z" fill="#444" /></Svg></span>
        <span className="ml-[20px]"><Svg w={10} h={13}><path d="M2 3h6v9H2zM1 2h8M4 1h2M4 5v6M6 5v6" stroke="#333" /></Svg></span>
        <span className="ml-[15px] w-[8px] h-[8px] mt-[4px] bg-[repeating-conic-gradient(#777_0_25%,transparent_0_50%)] bg-[length:2px_2px]" />
      </div>
      <div className="h-[8px] shrink-0 border-t border-[#888] bg-[#ededed] flex items-center justify-center"><Grip /></div>
      <div className="h-[8px] shrink-0 border-t border-[#888] flex items-center justify-end gap-[2px] pr-[7px]">
        <span className="w-[6px] h-[6px] bg-[#999]" />
        <span className="w-[6px] h-[6px] bg-[#999] mr-[4px]" />
        <span className="w-[9px] h-[4px] bg-[repeating-linear-gradient(90deg,#888_0,#888_1px,transparent_1px,transparent_2px)]" />
      </div>
    </div>
  )
}

/* ---- Dock ---- */
function DockItem({ icon, label, active }: { icon: React.ReactNode; label: string; active?: boolean }) {
  return (
    <div className={active
      ? 'h-[23px] mx-[4px] mt-[1px] pl-[6px] flex items-center gap-[9px] bg-[#a1a1a1] border border-[#888] rounded-[2px]'
      : 'h-[28px] pl-[10px] flex items-center gap-[9px]'}>
      <span className="w-[18px] flex justify-center shrink-0">{icon}</span>
      <span className="text-[9.5px] font-semibold text-[#2a2a2a] whitespace-nowrap">{label}</span>
    </div>
  )
}

function DockGroup({ children, h, flush }: { children: React.ReactNode; h: string; flush?: boolean }) {
  return (
    <div className={'bg-[#efefef] border-b border-[#777] shrink-0 ' + h}>
      <div className="h-[11px] bg-[#dedede] flex items-center justify-center"><Grip /></div>
      <div className={flush ? '' : '-mt-[1px]'}>{children}</div>
    </div>
  )
}

function Dock() {
  return (
    <div className="w-[167px] shrink-0 bg-[#d6d6d6] border-l border-[#777] flex flex-col">
      <div className="h-[12px] shrink-0 bg-[#8d8d8d] flex items-center justify-end pr-[4px]">
        <span className="text-[8px] leading-none font-bold text-[#ddd] tracking-[-1px]">◂◂</span>
      </div>
      <DockGroup h="h-[97px]">
        <DockItem label="Seiten" icon={<Svg w={18} h={16}><path d="M1 3l8-1v12l-8 1zM17 3l-8-1v12l8 1zM9 0v16" fill="#fff" stroke="#333" /></Svg>} />
        <DockItem label="Ebenen" icon={<Svg w={18} h={16}><path d="M9 9l8 3-8 4-8-4z" fill="#333" /><path d="M9 5l8 3-8 4-8-4z" fill="#777" /><path d="M9 1l8 3-8 4-8-4z" fill="#eee" stroke="#777" /></Svg>} />
        <DockItem label="Verknüpfungen" icon={<Svg w={18} h={16}><ellipse cx="5" cy="5" rx="4" ry="3" transform="rotate(35 5 5)" stroke="#444" strokeWidth="1.3" /><ellipse cx="10" cy="10" rx="4" ry="3" transform="rotate(35 10 10)" stroke="#444" strokeWidth="1.3" /><ellipse cx="14" cy="10" rx="3" ry="3" stroke="#444" strokeWidth="1.3" /></Svg>} />
      </DockGroup>
      <DockGroup h="h-[69px]">
        <DockItem label="Kontur" icon={<Svg w={18} h={14}><path d="M0 1h18" stroke="#555" strokeDasharray="2 1" /><path d="M0 5h18" stroke="#444" /><path d="M0 10h18" stroke="#333" strokeWidth="3" /></Svg>} />
        <DockItem label="Farbe" icon={<Svg w={18} h={16}><path d="M1 11c0-6 6-10 12-9 3 .5 4 2 3 3-2 1-4 1-3 4 1 4-3 6-6 6s-6-1-6-4z" fill="#444" /><circle cx="11" cy="5" r="1.300" fill="#ddd" /><circle cx="6" cy="6" r="1.300" fill="#ddd" /><circle cx="4" cy="10" r="1.300" fill="#ddd" /><circle cx="8" cy="12" r="1.300" fill="#ddd" /></Svg>} />
      </DockGroup>
      <DockGroup h="h-[41px]" flush>
        <DockItem active label="Farbfelder" icon={<Svg w={16} h={14}><rect width="16" height="14" fill="#333" /><rect x="1" y="1" width="4" height="3" fill="#555" /><rect x="6" y="1" width="4" height="3" fill="#777" /><rect x="11" y="1" width="4" height="3" fill="#999" /><rect x="1" y="5" width="4" height="3" fill="#777" /><rect x="6" y="5" width="4" height="3" fill="#ccc" /><rect x="11" y="5" width="4" height="3" fill="#ccc" /><rect x="1" y="9" width="4" height="4" fill="#aaa" /><rect x="6" y="9" width="4" height="4" fill="#eee" /><rect x="11" y="9" width="4" height="4" fill="#fff" /></Svg>} />
      </DockGroup>
      <DockGroup h="h-[69px]">
        <DockItem label="Zeichenformate" icon={<span className="relative block w-[18px] h-[18px]"><span className="absolute left-[5px] top-[-3px] text-[20px] leading-none font-['Liberation_Sans',sans-serif] font-bold text-[#333]">A</span><span className="absolute left-0 bottom-[1px] w-[7px] h-[7px] border border-[#333] bg-white" /><span className="absolute left-[3px] bottom-[-2px] w-[7px] h-[7px] border border-[#333] bg-white" /></span>} />
        <DockItem label="Absatzformate" icon={<Svg w={18} h={18}><path d="M11 1a4 4 0 1 0 0 8z" fill="#444" /><path d="M11 0h6M12 0v13M15.500 0v13" stroke="#333" strokeWidth="1.3" /><rect x="0.500" y="8.500" width="7" height="7" fill="#fff" stroke="#333" /><rect x="3.500" y="11.500" width="6" height="6" fill="#fff" stroke="#333" /></Svg>} />
      </DockGroup>
      <DockGroup h="h-[41px]">
        <DockItem label="2012-08" icon={<Svg w={18} h={14}><path d="M1 12V3c3-2 6-1 8 1 2-2 5-3 8-1v9c-3-1-6-1-8 1-2-2-5-2-8-1z" fill="#eee" stroke="#333" /><path d="M1 13c3-3 6-2 8 0 2-2 5-3 8 0v1H1z" fill="#333" /></Svg>} />
      </DockGroup>
    </div>
  )
}

function Watermark() {
  return (
    <div className="absolute left-[56px] top-[678px] text-[21px] leading-[24px] font-bold text-white tracking-[0.6px] font-['Liberation_Sans',sans-serif] [-webkit-text-stroke:3px_#333] [paint-order:stroke_fill]">
      PSD-Tutorials.de
    </div>
  )
}

export default function App() {
  return (
    <div className={'relative w-[1280px] h-[720px] overflow-hidden bg-[#d6d6d6] flex flex-col ' + FONT}>
      <MenuBar />
      <ControlBar />
      <div className="flex-1 min-h-0 flex">
        <div className="flex-1 min-w-0 flex flex-col">
          <Tabs />
          <Ruler />
          <Canvas />
          <StatusBar />
        </div>
        <Dock />
      </div>
      <ToolPanel />
      <SwatchPanel />
      <Watermark />
    </div>
  )
}
